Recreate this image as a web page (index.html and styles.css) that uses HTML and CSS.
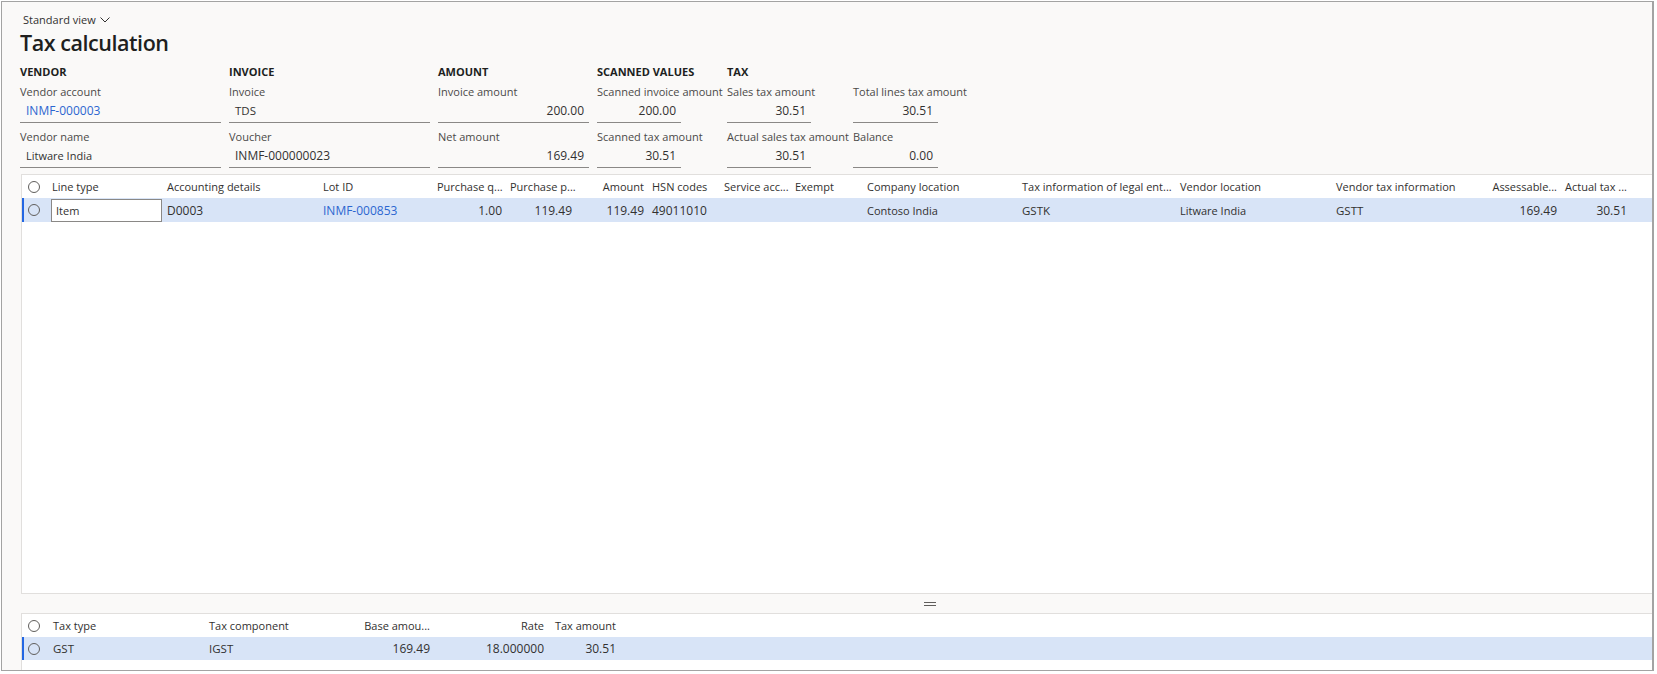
FILE: index.html
```html
<!DOCTYPE html>
<html lang="en">
<head>
<meta charset="utf-8">
<title>Tax calculation</title>
<link rel="stylesheet" href="styles.css">
</head>
<body>
<div class="frame">
  <div class="head">
    <div class="view">Standard view
      <svg class="chev" width="10" height="6" viewBox="0 0 10 6"><polyline points="0.5,0.5 5,5 9.5,0.5" fill="none" stroke="#323130" stroke-width="1"/></svg>
    </div>
    <h1 class="title">Tax calculation</h1>
    <div class="groups">
      <section class="group">
        <h2>VENDOR</h2>
        <div class="cols">
          <div class="col w-vendor">
            <div class="field"><label>Vendor account</label><div class="input link v12">INMF-000003</div></div>
            <div class="field"><label>Vendor name</label><div class="input">Litware India</div></div>
          </div>
        </div>
      </section>
      <section class="group">
        <h2>INVOICE</h2>
        <div class="cols">
          <div class="col w-invoice">
            <div class="field"><label>Invoice</label><div class="input caps">TDS</div></div>
            <div class="field"><label>Voucher</label><div class="input v12">INMF-000000023</div></div>
          </div>
        </div>
      </section>
      <section class="group">
        <h2>AMOUNT</h2>
        <div class="cols">
          <div class="col w-amount">
            <div class="field"><label>Invoice amount</label><div class="input num v12">200.00</div></div>
            <div class="field"><label>Net amount</label><div class="input num v12">169.49</div></div>
          </div>
        </div>
      </section>
      <section class="group">
        <h2>SCANNED VALUES</h2>
        <div class="cols">
          <div class="col w-scanned">
            <div class="field"><label>Scanned invoice amount</label><div class="input num short v12">200.00</div></div>
            <div class="field"><label>Scanned tax amount</label><div class="input num short v12">30.51</div></div>
          </div>
        </div>
      </section>
      <section class="group">
        <h2>TAX</h2>
        <div class="cols">
          <div class="col w-tax">
            <div class="field"><label>Sales tax amount</label><div class="input num short v12">30.51</div></div>
            <div class="field"><label>Actual sales tax amount</label><div class="input num short v12">30.51</div></div>
          </div>
          <div class="col w-total">
            <div class="field"><label>Total lines tax amount</label><div class="input num short2 v12">30.51</div></div>
            <div class="field"><label>Balance</label><div class="input num short2 v12">0.00</div></div>
          </div>
        </div>
      </section>
    </div>
  </div>

  <div class="grid">
    <div class="row hdr">
      <div class="cell c-radio"><span class="radio"></span></div>
      <div class="cell c-line">Line type</div>
      <div class="cell c-acct">Accounting details</div>
      <div class="cell c-lot">Lot ID</div>
      <div class="cell c-pq num">Purchase q...</div>
      <div class="cell c-pp num">Purchase p...</div>
      <div class="cell c-amt num">Amount</div>
      <div class="cell c-hsn">HSN codes</div>
      <div class="cell c-svc">Service acc...</div>
      <div class="cell c-exempt">Exempt</div>
      <div class="cell c-comp">Company location</div>
      <div class="cell c-taxinfo">Tax information of legal ent...</div>
      <div class="cell c-vloc">Vendor location</div>
      <div class="cell c-vtax">Vendor tax information</div>
      <div class="cell c-assess num">Assessable...</div>
      <div class="cell c-actual num">Actual tax ...</div>
    </div>
    <div class="row sel">
      <div class="cell c-radio"><span class="radio"></span></div>
      <div class="cell c-line"><div class="cellinput">Item</div></div>
      <div class="cell c-acct v12">D0003</div>
      <div class="cell c-lot link v12">INMF-000853</div>
      <div class="cell c-pq num v12">1.00</div>
      <div class="cell c-pp num v12">119.49</div>
      <div class="cell c-amt num v12">119.49</div>
      <div class="cell c-hsn v12">49011010</div>
      <div class="cell c-svc"></div>
      <div class="cell c-exempt"></div>
      <div class="cell c-comp">Contoso India</div>
      <div class="cell c-taxinfo caps">GSTK</div>
      <div class="cell c-vloc">Litware India</div>
      <div class="cell c-vtax caps">GSTT</div>
      <div class="cell c-assess num v12">169.49</div>
      <div class="cell c-actual num v12">30.51</div>
    </div>
  </div>

  <div class="splitter"><span class="grip"></span></div>

  <div class="grid2">
    <div class="row hdr2">
      <div class="cell c2-radio"><span class="radio"></span></div>
      <div class="cell c2-type">Tax type</div>
      <div class="cell c2-comp">Tax component</div>
      <div class="cell c2-base num">Base amou...</div>
      <div class="cell c2-rate num">Rate</div>
      <div class="cell c2-amt num">Tax amount</div>
    </div>
    <div class="row sel row2">
      <div class="cell c2-radio"><span class="radio"></span></div>
      <div class="cell c2-type caps">GST</div>
      <div class="cell c2-comp caps">IGST</div>
      <div class="cell c2-base num v12">169.49</div>
      <div class="cell c2-rate num v12">18.000000</div>
      <div class="cell c2-amt num v12">30.51</div>
    </div>
  </div>
</div>
</body>
</html>
```

FILE: styles.css
```css
* { box-sizing: border-box; }

body {
  margin: 0;
  background: #ffffff;
  font-family: "Segoe UI", "Open Sans", "Noto Sans", sans-serif;
  font-size: 11px;
  color: #323130;
}

.v12 { font-size: 12px; }
.caps { font-size: 11.5px; }

.frame {
  margin: 1px 3px 0 1px;
  height: 670px;
  border: 1px solid #a3a3a3;
  border-right-width: 2px;
  background: #faf9f8;
  display: flex;
  flex-direction: column;
}

.head {
  padding: 10px 0 0 18px;
}

.view {
  display: flex;
  align-items: center;
  gap: 4px;
  height: 16px;
  line-height: 16px;
  margin-left: 3px;
  color: #323130;
}

.chev { display: block; }

.title {
  margin: 0;
  font-size: 21.5px;
  letter-spacing: -0.45px;
  line-height: 30px;
  font-weight: 600;
  color: #201f1e;
}

.groups {
  display: flex;
  gap: 8px;
  margin-top: 6px;
}

.group h2 {
  margin: 0 0 4px;
  font-size: 11px;
  line-height: 16px;
  font-weight: 700;
  color: #201f1e;
}

.cols {
  display: flex;
  gap: 8px;
}

.col {
  display: flex;
  flex-direction: column;
  gap: 6px;
}

.w-vendor { width: 201px; }
.w-invoice { width: 201px; }
.w-amount { width: 151px; }
.w-scanned { width: 122px; }
.w-tax { width: 118px; }
.w-total { width: 85px; }

.field label {
  display: block;
  line-height: 16px;
  height: 16px;
  color: #4b4a48;
  white-space: nowrap;
}

.input {
  height: 23px;
  line-height: 22px;
  border-bottom: 1px solid #8a8886;
  padding: 0 5px 0 6px;
  white-space: nowrap;
}

.input.short { width: 84px; }
.input.short2 { width: 85px; }

.num { text-align: right; }
.link { color: #2c66d0; }

/* grids */
.grid {
  margin: 6px 0 0 19px;
  height: 420px;
  background: #ffffff;
  border: 1px solid #e1dfdd;
  border-right: 0;
}

.row {
  display: flex;
  align-items: center;
  height: 24px;
}

.row.hdr { height: 23px; }

.cell {
  flex: none;
  padding: 0 4px;
  white-space: nowrap;
  overflow: hidden;
}

.sel {
  background: #d8e4f7;
  box-shadow: inset 2px 0 0 #2266e3;
}

.radio {
  display: block;
  width: 12px;
  height: 12px;
  border: 1px solid #605e5c;
  border-radius: 50%;
}

.c-radio { width: 26px; padding-left: 6px; }
.c-line { width: 115px; }
.c-acct { width: 156px; }
.c-lot { width: 114px; }
.c-pq { width: 73px; }
.c-pp { width: 70px; }
.c-amt { width: 72px; }
.c-hsn { width: 72px; }
.c-svc { width: 71px; }
.c-exempt { width: 72px; }
.c-comp { width: 155px; }
.c-taxinfo { width: 158px; }
.c-vloc { width: 156px; }
.c-vtax { width: 156px; }
.c-assess { width: 73px; }
.c-actual { width: 70px; }

.cellinput {
  margin-left: -1px;
  width: 111px;
  height: 23px;
  line-height: 21px;
  border: 1px solid #8a8886;
  background: #ffffff;
  padding-left: 4px;
}

.splitter {
  margin-left: 19px;
  height: 19px;
  display: flex;
  align-items: center;
  padding-left: 903px;
}

.grip {
  display: block;
  width: 12px;
  height: 4px;
  border-top: 1px solid #605e5c;
  border-bottom: 1px solid #605e5c;
}

.grid2 {
  flex: 1;
  margin-left: 19px;
  background: #ffffff;
  border-top: 1px solid #e1dfdd;
  border-left: 1px solid #e1dfdd;
}

.hdr2 { height: 23px; }
.row2 { height: 23px; }

.c2-radio { width: 27px; padding-left: 6px; }
.c2-type { width: 156px; }
.c2-comp { width: 154px; }
.c2-base { width: 75px; }
.c2-rate { width: 114px; }
.c2-amt { width: 72px; }
```
